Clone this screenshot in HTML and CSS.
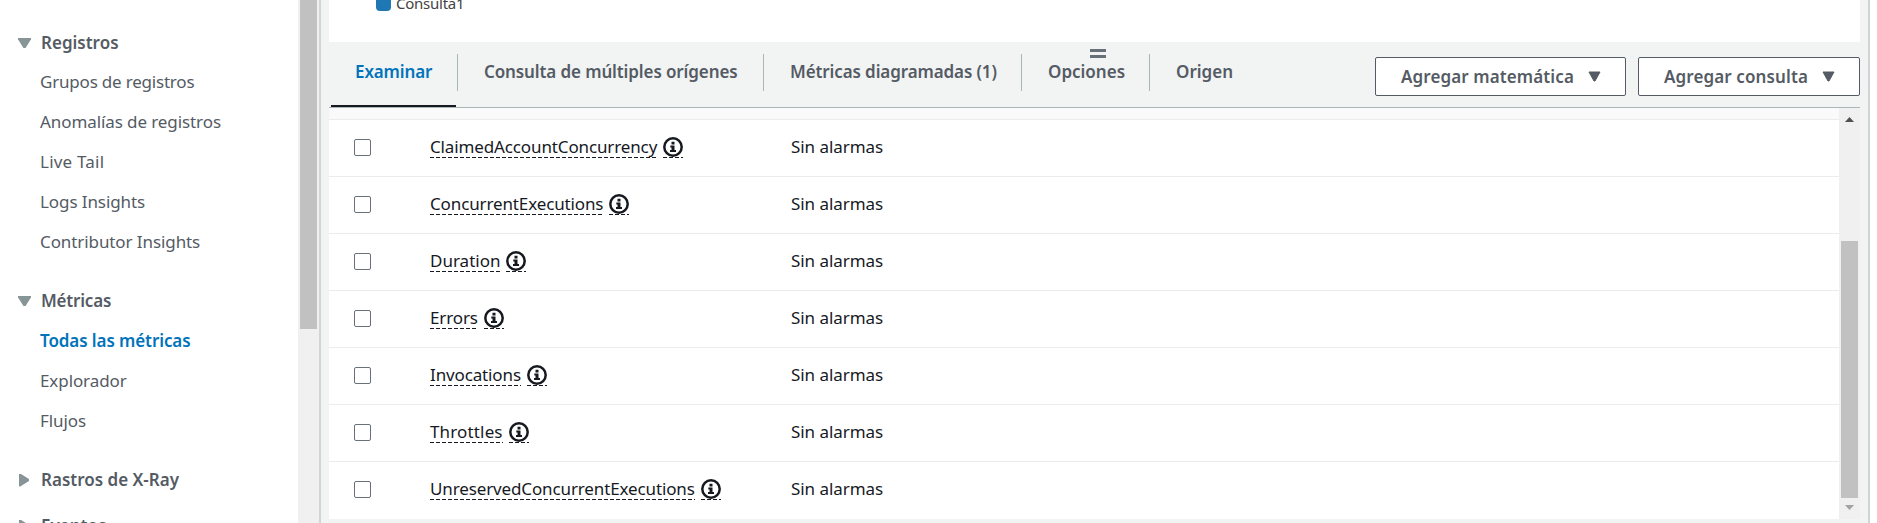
FILE: index.html
```html
<!DOCTYPE html>
<html lang="es"><head><meta charset="utf-8"><title>Métricas</title><link rel="stylesheet" href="styles.css"></head>
<body>
<div class="app">
<nav class="side">
  <div class="links">
    <section class="logs"><h3><i class="tri down"></i><span>Registros</span></h3>
      <a class="snug"><span>Grupos de registros</span></a><a><span>Anomalías de registros</span></a><a class="wide"><span>Live Tail</span></a><a><span>Logs Insights</span></a><a><span>Contributor Insights</span></a></section>
    <section><h3 class="snug"><i class="tri down"></i><span>Métricas</span></h3>
      <a class="current"><span>Todas las métricas</span></a><a><span>Explorador</span></a><a><span>Flujos</span></a></section>
    <section class="closed"><h3><i class="tri right"></i><span>Rastros de X-Ray</span></h3></section>
    <section class="closed"><h3><i class="tri right"></i><span>Eventos</span></h3></section>
  </div>
  <div class="side-scroll"><div class="side-thumb"></div></div>
</nav>
<main class="main">
  <div class="graph"><i class="swatch"></i><span class="legend">Consulta1</span></div>
  <div class="toolbar">
    <div class="tabs">
      <div class="tab active"><span>Examinar</span></div>
      <div class="tab t2"><span>Consulta de múltiples orígenes</span></div>
      <div class="tab t3"><span>Métricas diagramadas (1)</span></div>
      <div class="tab t4"><span>Opciones</span></div>
      <div class="tab t5"><span>Origen</span></div>
    </div>
    <div class="buttons">
      <button class="btn b1"><span>Agregar matemática</span><svg width="13" height="11" viewBox="0 0 13 11"><path d="M1 1h11L7 10H6z" fill="#545b64" stroke="#545b64" stroke-linejoin="round"/></svg></button>
      <button class="btn b2"><span>Agregar consulta</span><svg width="13" height="11" viewBox="0 0 13 11"><path d="M1 1h11L7 10H6z" fill="#545b64" stroke="#545b64" stroke-linejoin="round"/></svg></button>
    </div>
    <div class="grip"></div>
  </div>
  <div class="list">
    <div class="rows" id="rows"><div class="head"></div></div>
    <div class="scroll">
      <svg class="up" width="9" height="5" viewBox="0 0 9 5"><path d="M0 5L4.500 0L9 5z" fill="#505050"/></svg>
      <div class="thumb"></div>
      <svg class="dn" width="9" height="5" viewBox="0 0 9 5"><path d="M0 0h9L4.500 5z" fill="#a3a3a3"/></svg>
    </div>
  </div>
</main>
<aside class="edge"></aside>
</div>
<script src="rows.js"></script>
</body></html>
```
FILE: styles.css
```css
*{box-sizing:border-box}
body{margin:0;height:523px;overflow:hidden;font:17px/24px "Noto Sans","Open Sans",sans-serif;color:#16191f;background:#fff}
.app{display:flex;height:523px;overflow:hidden}
.side{display:flex;width:321px;flex:none;border-right:2px solid #d0d5d5}
.links{flex:1;padding-top:31px;overflow:hidden;color:#545b64;white-space:nowrap}
.links section{height:258px}
.links section+section{height:179px}
.links section.closed{height:46px}
h3{margin:0;font-size:17px;line-height:24px;height:24px;font-weight:600;display:flex;align-items:center;padding-left:18px}
.links a{display:block;height:24px;margin-top:16px;padding-left:40px;letter-spacing:-.09px}
.logs h3{margin-bottom:-1px}
.links .snug{letter-spacing:-.2px}
.links .wide{letter-spacing:.22px}
.links .current{color:#0073bb;font-weight:600}
.tri{width:13px;height:10px;background:#879596;margin-right:10px;clip-path:polygon(0 0,100% 0,100% 12%,58% 100%,42% 100%,0 12%)}
.tri.right{width:10px;height:13px;margin:0 12px 0 1px;clip-path:polygon(0 0,12% 0,100% 42%,100% 58%,12% 100%,0 100%)}
.side-scroll{width:21px;background:#f0f0f0;padding:0 2px}
.side-thumb{width:17px;height:329px;background:#c1c1c1}
.main{flex:1;background:#f2f3f3;padding-left:8px;padding-right:8px;min-width:0}
.graph{height:42px;background:#fff;display:flex;padding-left:47px}
.swatch{width:15px;height:11px;background:#1f77b4;border-radius:0 0 4px 4px}
.legend{font-size:15px;line-height:20px;margin:-7px 0 0 5px;height:20px;color:#444;letter-spacing:-.25px}
.toolbar{position:relative;height:66px;border-bottom:1px solid #aab7b8;display:flex;justify-content:space-between}
.tabs{display:flex;font-weight:600;color:#545b64;padding-left:2px;white-space:nowrap;letter-spacing:-.11px}
.tab{height:65px;padding:18px 0 0 26px;background:linear-gradient(#aab7b8,#aab7b8) right 12px/1px 37px no-repeat;flex:none}
.tab.active{width:127px;padding-left:24px;color:#0073bb;position:relative}
.tab.active::after{content:"";position:absolute;left:0;bottom:0;width:125px;height:2px;background:#16191f}
.t2{width:306px}.t3{width:258px}
.t4{width:128px;letter-spacing:0}
.tab.t5{background:none;letter-spacing:0}
.buttons{display:flex;gap:12px;padding-top:15px}
.btn{font:600 17px/24px "Noto Sans","Open Sans",sans-serif;height:39px;border:1px solid #545b64;border-radius:2px;background:#fff;color:#545b64;display:flex;align-items:center;justify-content:space-between;padding:0 24px 0 25px;white-space:nowrap;letter-spacing:.11px}
.b1{width:251px}.b2{width:222px}
.grip{position:absolute;left:761px;top:7px;width:16px;height:9px;border:solid #687078;border-width:3px 0}
.list{display:flex;height:411px}
.rows{flex:1;background:#fff}
.head{height:12px;background:#fafafa;border-bottom:1px solid #eaeded}
.row{height:57px;border-bottom:1px solid #eaeded;display:flex;align-items:flex-start}
.row:last-child{border:0}
.check{margin:19px 0 0 25px;width:17px;height:17px;border:1px solid #687078;border-radius:2px}
.name{width:361px;margin:15px 0 0 59px;display:flex;white-space:nowrap;letter-spacing:-.13px}
.name.plain{letter-spacing:0}
.name.loose{letter-spacing:.15px}
.alarm{margin-top:15px;letter-spacing:-.05px}
.label,.info{height:23px;background:repeating-linear-gradient(90deg,#16191f 0 4px,transparent 4px 6px) 0 100%/100% 1px no-repeat}
.info{margin-left:6px;width:20px}
.info svg{display:block;margin-top:2px}
.scroll{width:21px;background:#f0f0f0;padding:9px 2px 0;display:flex;flex-direction:column;align-items:center}
.thumb{width:17px;height:257px;margin-top:119px;background:#c1c1c1}
.dn{margin-top:7px}
.edge{width:9px;flex:none;border-left:2px solid #d0d5d5;background:#fff}
```
FILE: rows.js
```js
const metrics = [["ClaimedAccountConcurrency",""],["ConcurrentExecutions",""],["Duration","plain"],["Errors",""],["Invocations",""],["Throttles","loose"],["UnreservedConcurrentExecutions",""]];
const icon = '<svg width="20" height="20" viewBox="0 0 20 20"><circle cx="10" cy="10" r="8.700" fill="none" stroke="#16191f" stroke-width="2.500"/><path d="M8.500 4.800h3v2.700h-3zM7.300 8.500h4.200v4.500h1.500v2H7v-2h1.500v-2.500H7.300z" fill="#16191f"/></svg>';
document.getElementById("rows").insertAdjacentHTML("beforeend", metrics.map(([m, c]) => `<div class="row"><div class="check"></div><div class="name ${c}"><span class="label">${m}</span><span class="info">${icon}</span></div><span class="alarm">Sin alarmas</span></div>`).join(""));
```
